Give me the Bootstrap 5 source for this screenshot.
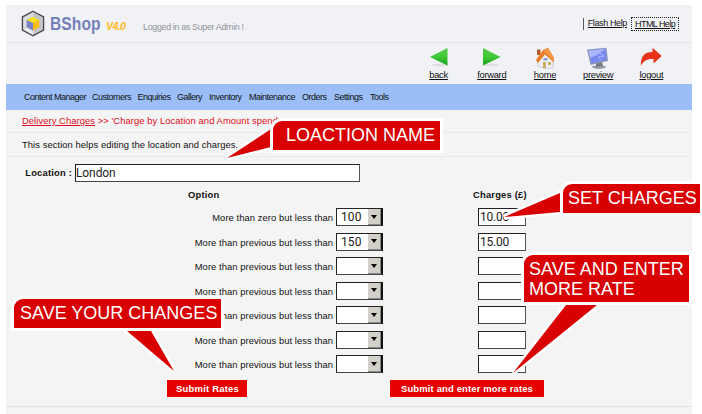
<!DOCTYPE html>
<html lang="en">
<head>
<meta charset="utf-8">
<title>BShop V4.0</title>
<link href="https://cdn.jsdelivr.net/npm/bootstrap@5.3.0/dist/css/bootstrap.min.css" rel="stylesheet">
<style>
body{font-family:"Liberation Sans",Arial,sans-serif;font-size:9.4px;line-height:12px;color:#111;background:#fff;width:702px;height:414px;overflow:hidden}
.t{white-space:nowrap;letter-spacing:.07px}
.t b{letter-spacing:.2px}
.panel{width:686px;height:409px;margin:5px 0 0 6px;background:#f4f4f4}
.top-bar{height:38px;background:#f1f2f6;border-bottom:1px solid #e2e4ea;padding-left:15px;padding-right:13px}
.brand{font-size:19px;font-weight:700;color:#7580bb;width:70px;margin-left:5px;letter-spacing:.1px}
.brand span{display:inline-block;transform:scaleX(.82);transform-origin:0 50%}
.ver{font-size:10.5px;font-weight:700;font-style:italic;color:#ffb91d;margin-left:-15px;width:38px;padding-top:5px;letter-spacing:-.6px;text-indent:1px}
.logged{font-size:9px;color:#92939a;padding-top:7px;letter-spacing:-.38px}
.tools{height:41px;background:#f1f2f6;padding-left:406px;font-size:9.4px;letter-spacing:-.3px}
.tool{width:53.2px;padding-top:4px}
.tool svg,.brand-icon{display:block}
a,a:hover{color:#111;text-decoration:underline}
.help{border-left:1px solid #555;height:12px;padding:0 4px 0 4px;font-size:9px;letter-spacing:-.37px;line-height:11px}
.help-box{border:1px dotted #222;height:14px;width:48px;padding:0 0 0 3px;font-size:9px;letter-spacing:-.55px}
.main-nav{height:26px;background:#9abef5;padding-left:18px;display:grid;grid-template-columns:68px 45.5px 39.5px 32px 40px 53px 32px 36px 30px;align-items:center;font-size:9px;letter-spacing:-.5px}
.crumb{height:23px;border-bottom:1px solid #e9eaf0;padding-left:16px;color:#e00c24}
.crumb a{color:#e00c24}
.info{height:24px;border-bottom:1px solid #e9eaf0;padding-left:16px}
.field{background:#fff;border:1px solid #222;border-right-color:#555;border-bottom-color:#444;height:18px;font-family:Roboto,sans-serif;font-size:12px;line-height:16px;padding-left:1px;color:#222}
.loc{padding-top:7px}
.loc b{width:69px;padding-right:3px;text-align:right}
.loc .field{width:285px;letter-spacing:-.1px;padding-left:0}
.heads{height:26px}
.heads b:first-child{width:182px;margin-left:182px}
.heads b:last-child{margin-left:103px}
.rate{height:24.5px}
.rate .label-t{width:327px;text-align:right}
.pick{width:47px;margin-left:3px;padding-left:4px;border-right:2px solid #111}
.pick i{width:13px;background:#d3d0c9;border-right:1px solid #888;border-bottom:1px solid #888}
.pick i:after{content:"";border:3.5px solid transparent;border-top:4px solid #000;border-bottom:0}
.charge{width:48px;margin-left:95px;letter-spacing:-.25px}
.actions{height:27.5px;border-bottom:1px solid #dfe0ea;padding-left:161px}
.act{background:#e60000;color:#fff;font-weight:700;height:17px;line-height:17px;font-size:9.5px;border:0;border-radius:0;padding:0;text-align:center}
.act-a{width:80px;padding-left:1px;letter-spacing:.2px}.act-b{width:154px;margin-left:143px;letter-spacing:.12px}
.tails{left:0;top:0;z-index:2;pointer-events:none}
.callout{z-index:3;background:#d80000;color:#fff;font-size:18px;line-height:19.5px;border:3px solid #fff;border-radius:12px 0 0 0;white-space:nowrap;padding:5px 0 0 12px}
.c1{left:270px;top:118px;width:173px;height:35px;padding-left:13px}
.c2{left:560px;top:181px;width:142px;height:35px;padding-left:5px;border-right-width:2px}
.c3{left:521px;top:252px;width:171px;height:53px;padding-left:5px}
.c4{left:11px;top:296px;width:213px;height:35px;padding-left:6px}
</style>
<script src="https://cdn.jsdelivr.net/npm/bootstrap@5.3.0/dist/js/bootstrap.bundle.min.js"></script>
</head>
<body class="position-relative">
<main class="panel t">
  <header class="top-bar d-flex align-items-center">
    <svg class="brand-icon" width="24" height="27" viewBox="0 0 24 27"><path d="M12 1.200 22.600 7v13L12 25.800 1.400 20V7z" fill="#c6c6ca" stroke="#45454a" stroke-width="1.300"/><path d="M2.500 7.700 12 2.500V6.500L5.500 10V17L2.500 19.500z" fill="#dcdcdf"/><path d="M2.500 19.500 12 24.700V21L5.500 17.500z" fill="#ededef"/><path d="M12 6.800 18.300 10 12 13 5.700 10z" fill="#f5e21b"/><path d="M5.700 10 12 13V20.500L5.700 17z" fill="#7b83c4"/><path d="M18.300 10 12 13V20.500L18.300 17z" fill="#fdbb17"/></svg>
    <div class="brand"><span>BShop</span></div>
    <div class="ver">V4.0</div>
    <div class="logged">Logged in as Super Admin !</div>
    <div class="help ms-auto"><a href="#">Flash Help</a></div>
    <div class="help-box"><a href="#">HTML Help</a></div>
  </header>
  <div class="tools d-flex">
    <div class="tool d-flex flex-column align-items-center"><svg width="24" height="22" viewBox="0 0 24 22"><defs><linearGradient id="g" x2="0" y2="1"><stop stop-color="#56c94b"/><stop offset=".5" stop-color="#3fca35"/><stop offset="1" stop-color="#169d1d"/></linearGradient></defs><ellipse cx="13" cy="18" rx="8" ry="1.500" fill="#dedfe2"/><path d="M3 10 20.500 1V18.500z" fill="url(#g)"/></svg><a href="#">back</a></div>
    <div class="tool d-flex flex-column align-items-center"><svg width="24" height="22" viewBox="0 0 24 22"><ellipse cx="11" cy="18" rx="8" ry="1.500" fill="#dedfe2"/><path d="M20.500 10 3 1V18.500z" fill="url(#g)"/></svg><a href="#">forward</a></div>
    <div class="tool d-flex flex-column align-items-center"><svg width="24" height="22" viewBox="0 0 24 22"><path d="M5 11 13 5 20 13V21L12 21.500 5 19z" fill="#f0f0f4" stroke="#b6b7c5" stroke-width=".6"/><path d="M4 2.500H7.500V8H4z" fill="#b55a2a"/><path d="M3 13 10 3 15 .8 21 11V15.500L12 7.500 5 16z" fill="#e87e28"/><path d="m10 3 5-2.200L21 11v3z" fill="#f39a47"/><path d="M10.500 11H14.500V13.500H10.500z" fill="#8c9ed8"/><path d="M10 15H13V21H10z" fill="#c7ad61"/><path d="M15 15H18V18H15z" fill="#c7ad61"/></svg><a href="#">home</a></div>
    <div class="tool d-flex flex-column align-items-center"><svg width="26" height="22" viewBox="0 0 26 22"><ellipse cx="14" cy="20" rx="7" ry="1.900" fill="#9b9ca8"/><path d="M11 16 17 15 18 19 11 20z" fill="#777989"/><path d="M2 2.500 21.500 .8 23 14 5.500 18z" fill="#8f95bb"/><path d="M3.500 3.500 20.300 2 21.500 12.700 6.500 16.200z" fill="#788af1"/><path d="M3.500 3.500 20.300 2 12 8 5 11z" fill="#aab7ff"/><path d="m12 4 7 5-6 1 3 3" stroke="#a9b8ff" fill="none"/></svg><a href="#">preview</a></div>
    <div class="tool d-flex flex-column align-items-center"><svg width="24" height="22" viewBox="0 0 24 22"><path d="M1.800 19C1.500 9 6 4.800 13.500 5V.8L22.700 9 14.500 16.500V12C8 11.500 4.500 13.500 1.800 19z" fill="#ea3219"/></svg><a href="#">logout</a></div>
  </div>
  <nav class="main-nav"><span>Content Manager</span><span>Customers</span><span>Enquiries</span><span>Gallery</span><span>Inventory</span><span>Maintenance</span><span>Orders</span><span>Settings</span><span>Tools</span></nav>
  <div class="crumb d-flex align-items-center"><div><a href="#">Delivery Charges</a> &gt;&gt; 'Charge by Location and Amount spend'</div></div>
  <div class="info d-flex align-items-center">This section helps editing the location and charges.</div>
  <div class="loc d-flex align-items-center"><b>Location :</b><div class="field">London</div></div>
  <div class="heads d-flex align-items-center"><b>Option</b><b>Charges (£)</b></div>
  <div class="rate d-flex align-items-start"><div class="label-t pt-1">More than zero but less than</div><div class="field pick d-flex justify-content-between">100<i class="d-flex align-items-center justify-content-center"></i></div><div class="field charge">10.00</div></div>
  <div class="rate d-flex align-items-start"><div class="label-t pt-1">More than previous but less than</div><div class="field pick d-flex justify-content-between">150<i class="d-flex align-items-center justify-content-center"></i></div><div class="field charge">15.00</div></div>
  <div class="rate d-flex align-items-start"><div class="label-t pt-1">More than previous but less than</div><div class="field pick d-flex justify-content-end"><i class="d-flex align-items-center justify-content-center"></i></div><div class="field charge"></div></div>
  <div class="rate d-flex align-items-start"><div class="label-t pt-1">More than previous but less than</div><div class="field pick d-flex justify-content-end"><i class="d-flex align-items-center justify-content-center"></i></div><div class="field charge"></div></div>
  <div class="rate d-flex align-items-start"><div class="label-t pt-1">More than previous but less than</div><div class="field pick d-flex justify-content-end"><i class="d-flex align-items-center justify-content-center"></i></div><div class="field charge"></div></div>
  <div class="rate d-flex align-items-start"><div class="label-t pt-1">More than previous but less than</div><div class="field pick d-flex justify-content-end"><i class="d-flex align-items-center justify-content-center"></i></div><div class="field charge"></div></div>
  <div class="rate d-flex align-items-start"><div class="label-t pt-1">More than previous but less than</div><div class="field pick d-flex justify-content-end"><i class="d-flex align-items-center justify-content-center"></i></div><div class="field charge"></div></div>
  <div class="actions d-flex"><button class="act act-a">Submit Rates</button><button class="act act-b">Submit and enter more rates</button></div>
</main>
<svg class="tails position-absolute" width="702" height="414"><g fill="#d80000" stroke="#fff" stroke-width="5" paint-order="stroke"><path d="M271 129V147L227 158z"/><path d="M560 193V212L504 217z"/><path d="M566 305H597L513 373z"/><path d="M127 331H151L174 371z"/></g></svg>
<div class="callout position-absolute c1">LOACTION NAME</div>
<div class="callout position-absolute c2">SET CHARGES</div>
<div class="callout position-absolute c3">SAVE AND ENTER<br>MORE RATE</div>
<div class="callout position-absolute c4">SAVE YOUR CHANGES</div>
</body>
</html>
